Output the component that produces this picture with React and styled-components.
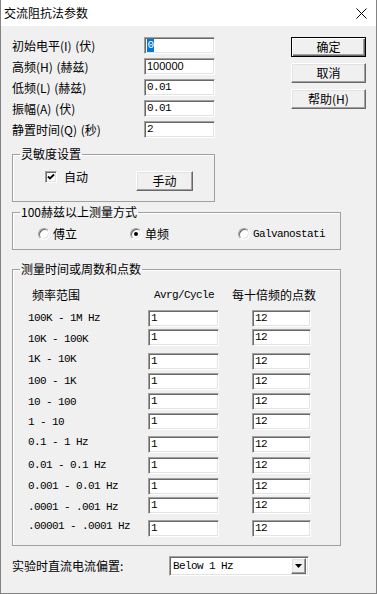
import React from 'react'
import styled, { createGlobalStyle, css } from 'styled-components'

const cjk = `"Noto Sans CJK SC", "Noto Sans", sans-serif`
const mono = `"Liberation Mono", "Noto Sans CJK SC", monospace`

const GlobalStyle = createGlobalStyle`
  html, body {
    margin: 0;
    padding: 0;
    background: #f0f0f0;
  }
  * {
    box-sizing: border-box;
  }
`

const sunken = css`
  border: 1px solid;
  border-color: #a0a0a0 #fff #fff #a0a0a0;
  box-shadow: inset 1px 1px 0 #696969, inset -1px -1px 0 #e3e3e3;
  background: #fff;
`

const raised = css`
  border: 1px solid;
  border-color: #fff #696969 #696969 #fff;
  box-shadow: inset -1px -1px 0 #a0a0a0, inset 1px 1px 0 #e3e3e3;
  background: #f0f0f0;
`

const Window = styled.div`
  width: 377px;
  height: 594px;
  display: flex;
  flex-direction: column;
  background: #f0f0f0;
  border: 1px solid #838383;
  border-top: none;
  font-family: ${cjk};
  font-size: 12px;
  color: #000;
  overflow: hidden;
`

const TitleBar = styled.div`
  height: 26px;
  flex: none;
  display: flex;
  align-items: center;
  justify-content: space-between;
  padding: 0 9px 0 3px;
  background: #fff;
`

const Title = styled.span`
  font-size: 12px;
  line-height: 14px;
`

const Body = styled.div`
  padding: 11px 10px 0 11px;
`

const TopSection = styled.div`
  display: flex;
  align-items: flex-start;
`

const FieldList = styled.div`
  display: flex;
  flex-direction: column;
  gap: 4px;
`

const FieldRow = styled.div`
  display: flex;
  align-items: center;
  height: 17px;
`

const FieldLabel = styled.span`
  width: 132px;
  line-height: 14px;
  word-spacing: 1px;
`

const EditBox = styled.div`
  ${sunken};
  width: ${p => p.$w || 71}px;
  height: 17px;
  display: flex;
  align-items: center;
  padding-left: 2px;
  font-family: ${p => (p.$sans ? '"Liberation Sans", Arial, sans-serif' : mono)};
  font-size: 11px;
  letter-spacing: ${p => (p.$sans ? '0' : '-0.6px')};
  line-height: 13px;
  white-space: nowrap;
`

const Selected = styled.span`
  background: #0078d7;
  color: #fff;
  padding: 0 0.5px;
`

const ButtonColumn = styled.div`
  margin-left: 76px;
  display: flex;
  flex-direction: column;
  gap: 6px;
`

const Button = styled.div`
  width: ${p => p.$w || 75}px;
  height: 20px;
  display: flex;
  align-items: center;
  justify-content: center;
  line-height: 14px;
  margin-top: ${p => p.$mt || 0}px;
  margin-left: ${p => p.$ml || 0}px;
  ${p =>
    p.$default
      ? css`
          border: 1px solid #000;
          background: #f0f0f0;
          box-shadow: inset 1px 1px 0 #fff, inset -1px -1px 0 #696969,
            inset -2px -2px 0 #a0a0a0;
        `
      : raised};
`

const Group = styled.fieldset`
  margin: ${p => p.$mt}px 0 0;
  padding: 0;
  min-width: 0;
  width: ${p => p.$w}px;
  border: 1px solid #a0a0a0;
  box-shadow: 1px 1px 0 #fff inset;
`

const Caption = styled.legend`
  margin-left: 7px;
  padding: 0 1px;
  line-height: 14px;
  font-size: 12px;
`

const SenseRow = styled.div`
  display: flex;
  align-items: flex-start;
  padding: 9px 0 10px 32px;
`

const CheckItem = styled.div`
  display: flex;
  align-items: center;
  gap: 7px;
  line-height: 14px;
`

const CheckBox = styled.span`
  ${sunken};
  width: 12px;
  height: 12px;
  display: flex;
  align-items: center;
  justify-content: center;
`

const RadioRow = styled.div`
  display: grid;
  grid-template-columns: 92px 108px auto;
  padding: 8px 0 8px 25px;
`

const RadioItem = styled.div`
  display: flex;
  align-items: center;
  gap: 3px;
  height: 14px;
  line-height: 14px;
  font-family: ${p => (p.$mono ? mono : cjk)};
  font-size: ${p => (p.$mono ? '11px' : '12px')};
  letter-spacing: ${p => (p.$mono ? '-0.6px' : '0')};
`

const Radio = styled.span`
  width: 12px;
  height: 12px;
  border-radius: 50%;
  border: 1px solid;
  border-color: #a0a0a0 #fff #fff #a0a0a0;
  box-shadow: inset 1px 1px 0 #696969, inset -1px -1px 0 #e3e3e3;
  background: #fff;
  display: flex;
  align-items: center;
  justify-content: center;
  &::after {
    content: '';
    width: 4px;
    height: 4px;
    border-radius: 50%;
    background: ${p => (p.$on ? '#000' : 'transparent')};
  }
`

const TableInner = styled.div`
  padding: 12px 0 8px 15px;
`

const TableHead = styled.div`
  display: grid;
  grid-template-columns: 120px 104px 59px;
  height: 14px;
  line-height: 14px;
`

const HeadCell = styled.span`
  margin-left: ${p => p.$ml}px;
  white-space: nowrap;
  font-family: ${p => (p.$mono ? mono : cjk)};
  font-size: ${p => (p.$mono ? '11px' : '12px')};
  letter-spacing: ${p => (p.$mono ? '-0.6px' : '0')};
`

const TableRow = styled.div`
  display: grid;
  grid-template-columns: 120px 104px 59px;
  align-items: start;
  height: 17px;
  margin-top: ${p => p.$gap}px;
`

const RangeLabel = styled.span`
  font-family: ${mono};
  font-size: 11px;
  letter-spacing: -0.6px;
  line-height: 17px;
  white-space: nowrap;
  margin: ${p => p.$shift}px 0 ${p => -p.$shift}px;
`

const BiasRow = styled.div`
  display: flex;
  align-items: center;
  margin-top: 10px;
`

const BiasLabel = styled.span`
  width: 157px;
  line-height: 14px;
`

const ComboBox = styled.div`
  ${sunken};
  width: 140px;
  height: 20px;
  display: flex;
  align-items: center;
  padding: 0 2px 0 3px;
  font-family: ${mono};
  font-size: 11px;
  letter-spacing: -0.6px;
`

const DropButton = styled.span`
  ${raised};
  margin-left: auto;
  width: 15px;
  height: 16px;
  display: flex;
  align-items: center;
  justify-content: center;
`

const fields = [
  { label: '初始电平(I) (伏)', value: <Selected>0</Selected> },
  { label: '高频(H) (赫兹)', value: '100000', sans: true },
  { label: '低频(L) (赫兹)', value: '0.01' },
  { label: '振幅(A) (伏)', value: '0.01' },
  { label: '静置时间(Q) (秒)', value: '2' },
]

const ranges = [
  { label: '100K - 1M Hz', gap: 8, shift: 0 },
  { label: '10K - 100K', gap: 2, shift: 2 },
  { label: '1K - 10K', gap: 7, shift: -2 },
  { label: '100 - 1K', gap: 3, shift: 0 },
  { label: '10 - 100', gap: 3, shift: 1 },
  { label: '1 - 10', gap: 3, shift: 1 },
  { label: '0.1 - 1 Hz', gap: 6, shift: -2 },
  { label: '0.01 - 0.1 Hz', gap: 4, shift: 0 },
  { label: '0.001 - 0.01 Hz', gap: 4, shift: 0 },
  { label: '.0001 - .001 Hz', gap: 2, shift: 2 },
  { label: '.00001 - .0001 Hz', gap: 6, shift: -2 },
]

const App = () => {
  return (
    <Window>
      <GlobalStyle />
      <TitleBar>
        <Title>交流阻抗法参数</Title>
        <svg width='11' height='11' viewBox='0 0 11 11'>
          <path d='M0.5 0.5 L10.5 10.5 M10.5 0.5 L0.5 10.5' stroke='#000' strokeWidth='1' />
        </svg>
      </TitleBar>
      <Body>
        <TopSection>
          <FieldList>
            {fields.map(f => (
              <FieldRow key={f.label}>
                <FieldLabel>{f.label}</FieldLabel>
                <EditBox $sans={f.sans}>{f.value}</EditBox>
              </FieldRow>
            ))}
          </FieldList>
          <ButtonColumn>
            <Button $default>确定</Button>
            <Button>取消</Button>
            <Button>帮助(H)</Button>
          </ButtonColumn>
        </TopSection>

        <Group $w={203} $mt={9}>
          <Caption>灵敏度设置</Caption>
          <SenseRow>
            <CheckItem>
              <CheckBox>
                <svg width='8' height='8' viewBox='0 0 8 8'>
                  <path d='M1 3.5 L3 5.5 L7 1.5' stroke='#000' strokeWidth='1.8' fill='none' />
                </svg>
              </CheckBox>
              自动
            </CheckItem>
            <Button $w={57} $mt={1} $ml={48}>
              手动
            </Button>
          </SenseRow>
        </Group>

        <Group $w={329} $mt={3}>
          <Caption>100赫兹以上测量方式</Caption>
          <RadioRow>
            <RadioItem>
              <Radio />
              傅立
            </RadioItem>
            <RadioItem>
              <Radio $on />
              单频
            </RadioItem>
            <RadioItem $mono>
              <Radio />
              Galvanostati
            </RadioItem>
          </RadioRow>
        </Group>

        <Group $w={329} $mt={12}>
          <Caption>测量时间或周数和点数</Caption>
          <TableInner>
            <TableHead>
              <HeadCell $ml={4}>频率范围</HeadCell>
              <HeadCell $ml={6} $mono>
                Avrg/Cycle
              </HeadCell>
              <HeadCell $ml={-20}>每十倍频的点数</HeadCell>
            </TableHead>
            {ranges.map(r => (
              <TableRow key={r.label} $gap={r.gap}>
                <RangeLabel $shift={r.shift}>{r.label}</RangeLabel>
                <EditBox>1</EditBox>
                <EditBox $w={59}>12</EditBox>
              </TableRow>
            ))}
          </TableInner>
        </Group>

        <BiasRow>
          <BiasLabel>实验时直流电流偏置:</BiasLabel>
          <ComboBox>
            Below 1 Hz
            <DropButton>
              <svg width='7' height='4' viewBox='0 0 7 4'>
                <path d='M0 0 H7 L3.5 4 Z' fill='#000' />
              </svg>
            </DropButton>
          </ComboBox>
        </BiasRow>
      </Body>
    </Window>
  )
}

export default App
